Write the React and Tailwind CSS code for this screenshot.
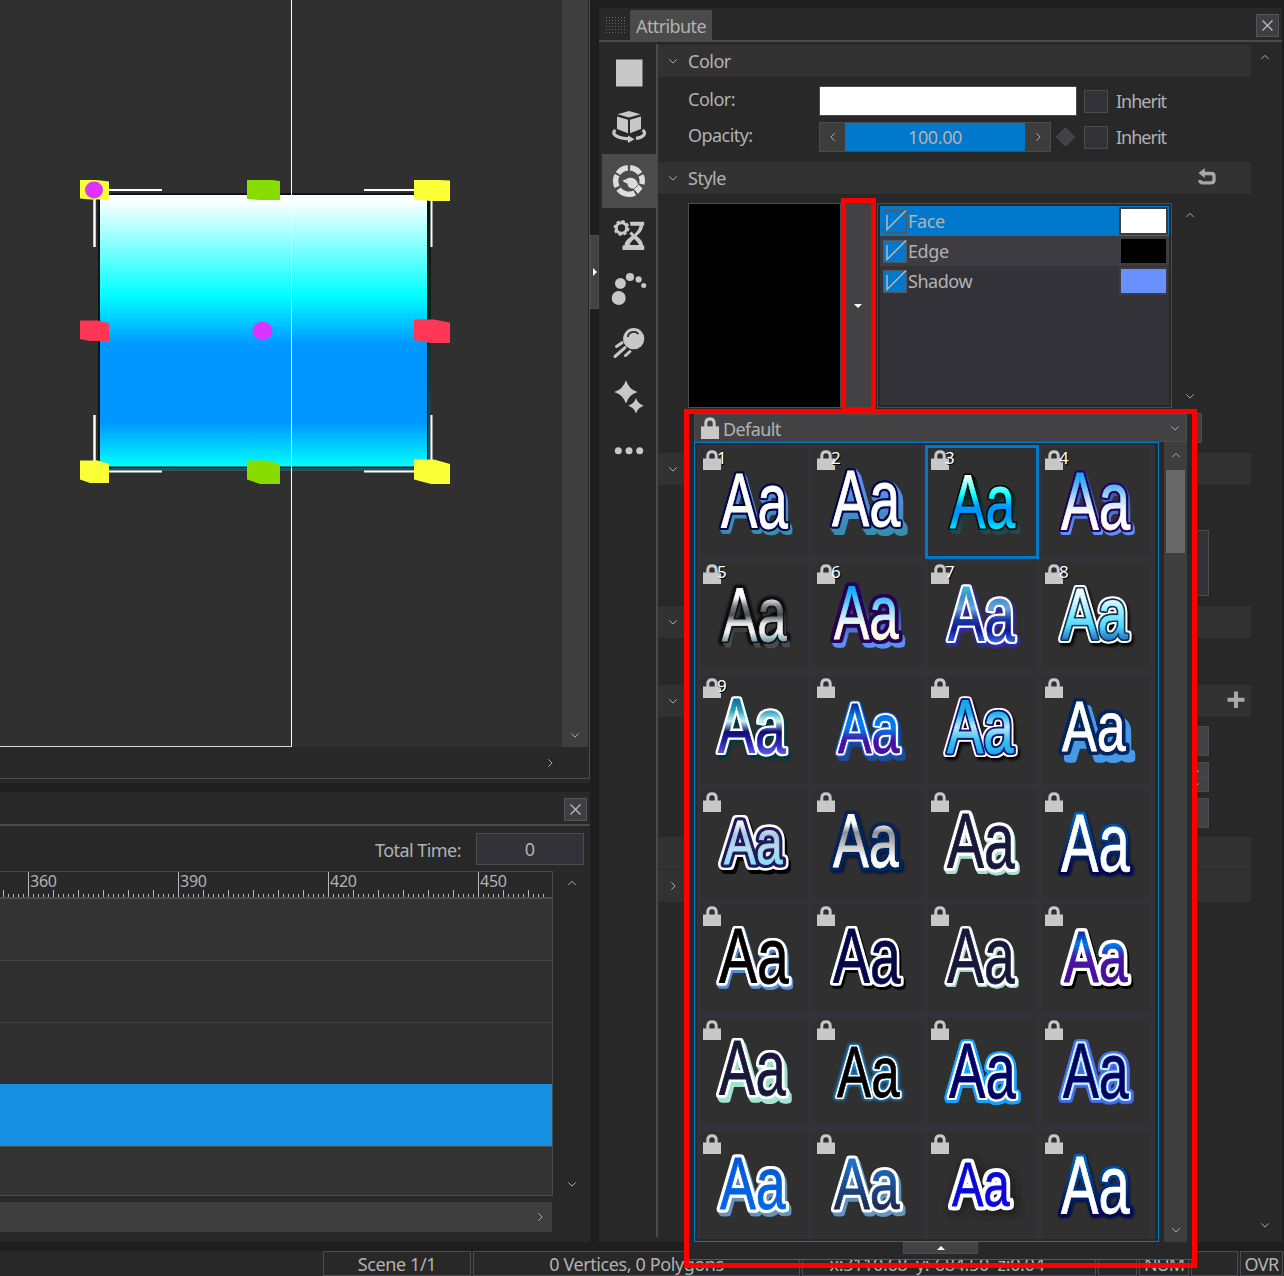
import React from "react";

const LABEL = "whitespace-nowrap text-[18px] leading-[24px] text-[#b2b2b2]";

function Chevron({ dir = "down", className = "" }) {
  const d = {
    down: "M1.5 4 L6 8.5 L10.5 4",
    up: "M1.5 8.5 L6 4 L10.5 8.5",
    left: "M8 1.5 L3.5 6 L8 10.5",
    right: "M4 1.5 L8.5 6 L4 10.5",
  }[dir];
  return (
    <svg viewBox="0 0 12 12" className={"block h-[10px] w-[10px] shrink-0 " + className} fill="none" stroke="#b8b8b8" strokeWidth="1.1">
      <path d={d} />
    </svg>
  );
}

function CloseButton() {
  return (
    <div className="flex h-[23px] w-[23px] items-center justify-center border border-[#555558] bg-[#3f3f42]">
      <svg viewBox="0 0 11 11" className="h-[11px] w-[11px]" stroke="#b8b8b8" strokeWidth="1.4">
        <path d="M0.500 0.500 L10.500 10.500 M10.500 0.500 L0.500 10.500" />
      </svg>
    </div>
  );
}

/* ---------- viewport ---------- */

function Scene() {
  return (
    <svg width="562" height="747" viewBox="0 0 562 747" className="block shrink-0 bg-[#303030]">
      <defs>
        <linearGradient id="sky" x1="0" y1="0" x2="0" y2="1">
          <stop offset="0" stopColor="#ffffff" />
          <stop offset="0.03" stopColor="#f6ffff" />
          <stop offset="0.37" stopColor="#00ffff" />
          <stop offset="0.555" stopColor="#0096ff" />
          <stop offset="0.835" stopColor="#0096ff" />
          <stop offset="1" stopColor="#00ffff" />
        </linearGradient>
        <linearGradient id="depth" x1="0" y1="0" x2="0" y2="1">
          <stop offset="0" stopColor="#04140a" />
          <stop offset="0.4" stopColor="#0b2418" />
          <stop offset="1" stopColor="#2b5460" />
        </linearGradient>
      </defs>
      <rect x="101" y="196" width="330" height="275" fill="url(#depth)" />
      <rect x="98" y="193" width="330" height="275" fill="#0c1413" />
      <rect x="100" y="195" width="327" height="271.5" fill="url(#sky)" />
      <g fill="#ffffff">
        <rect x="108" y="189" width="54" height="2" />
        <rect x="364" y="189" width="52" height="2" />
        <rect x="108" y="470.5" width="54" height="2" />
        <rect x="364" y="470.5" width="52" height="2" />
        <rect x="430.5" y="200" width="2" height="47" />
        <rect x="430.5" y="415" width="2" height="46" />
      </g>
      <g fill="#c9c6cc">
        <rect x="93" y="199" width="3" height="48" />
        <rect x="93" y="415" width="3" height="47" />
      </g>
      <rect x="94" y="199" width="1" height="48" fill="#fff" />
      <rect x="94" y="415" width="1" height="47" fill="#fff" />
      <g fill="#fbff36">
        <path d="M80 180 H96 L109 181.500 V199.500 H90 L80 198.500 Z" />
        <path d="M414 180 H439 L450 180.500 V201 H431 L414 199.500 Z" />
        <path d="M80 460.500 H98 L109 464 V483 H90 L80 479.500 Z" />
        <path d="M414 459.500 H434 L450 464 V484 H431 L414 479.500 Z" />
      </g>
      <g fill="#88dc00">
        <path d="M247 180 H272 L280 181 V200 H259 L247 199 Z" />
        <path d="M247 460.500 H267 L280 464 V484 H260 L247 479.500 Z" />
      </g>
      <g fill="#ff3654">
        <path d="M80 320.500 H98 L109 323.500 V341 H90 L80 339 Z" />
        <path d="M414 319.500 H434 L450 322.500 V343 H430 L414 340 Z" />
      </g>
      <ellipse cx="94" cy="190" rx="9" ry="8.500" fill="#dc34fe" />
      <ellipse cx="262.500" cy="331" rx="10" ry="9.300" fill="#dc34fe" />
      <rect x="291" y="0" width="1" height="747" fill="#ffffff" />
      <rect x="0" y="746" width="292" height="1" fill="#d8d8d8" />
    </svg>
  );
}

function Viewport() {
  return (
    <div className="h-[783px] bg-[#282828]">
      <div className="flex h-[779px] w-[590px] flex-col border-b border-r border-[#4c4c4c]">
        <div className="flex h-[747px]">
          <Scene />
          <div className="flex w-[26px] flex-col items-center justify-end bg-[#3e3e3e] pb-[7px]">
            <Chevron />
          </div>
        </div>
        <div className="flex flex-1 items-center justify-end pr-[34px]">
          <Chevron dir="right" />
        </div>
      </div>
    </div>
  );
}

/* ---------- timeline ---------- */

function Ruler() {
  const marks = [];
  for (let i = -5; i <= 103; i++) marks.push(i);
  return (
    <svg width="552" height="25" viewBox="0 0 552 25" className="block overflow-visible" shapeRendering="crispEdges">
      {marks.map((i) => {
        const h = i % 30 === 0 ? 25 : i % 5 === 0 ? 7 : 3;
        return <rect key={i} x={28 + i * 5} y={25 - h} width="1" height={h} fill="#b8b8b8" />;
      })}
      {[360, 390, 420, 450].map((n, k) => (
        <text key={n} x={30 + k * 150} y="15" fontSize="16" textLength="27" fill="#b2b2b2">
          {n}
        </text>
      ))}
    </svg>
  );
}

function Timeline() {
  return (
    <div className="flex h-[450px] flex-col bg-[#282828]">
      <div className="flex h-[34px] items-center justify-end border-b-2 border-[#4a4a4a] pr-[3px] pt-[2px]">
        <CloseButton />
      </div>
      <div className="flex h-[45px] items-start justify-end gap-[15px] pr-[6px] pt-[7px]">
        <span className={LABEL + " mt-[5px] tracking-[-0.55px]"}>Total Time:</span>
        <div className={LABEL + " flex h-[32px] w-[108px] items-center justify-center border border-[#4c4c4c] bg-[#333238]"}>0</div>
      </div>
      <div className="flex">
        <div className="w-[553px]">
          <div className="border-r border-t border-[#4a4a4a]">
            <Ruler />
            <div className="h-[2px] bg-[#4c4c4c]" />
            <div className="h-[62px] border-b border-[#434343] bg-[#333333]" />
            <div className="h-[62px] border-b border-[#434343] bg-[#2f2f2f]" />
            <div className="h-[61px] bg-[#2f2f2f]" />
            <div className="h-[62px] bg-[#168fe3]" />
            <div className="h-[50px] border-b border-t border-[#4c4c4c] bg-[#333333]" />
          </div>
          <div className="mt-[6px] flex h-[30px] w-[552px] items-center justify-end bg-[#3e3e3e] pr-[7px]">
            <Chevron dir="right" />
          </div>
        </div>
        <div className="flex h-[325px] flex-1 flex-col items-center justify-between pb-[7px] pt-[7px]">
          <Chevron dir="up" />
          <Chevron />
        </div>
      </div>
    </div>
  );
}

/* ---------- attribute sidebar ---------- */

function arc(cx, cy, r, a, b) {
  const p = (t) => [cx + r * Math.cos((t * Math.PI) / 180), cy + r * Math.sin((t * Math.PI) / 180)];
  const [x1, y1] = p(a);
  const [x2, y2] = p(b);
  return `M${x1} ${y1} A${r} ${r} 0 0 1 ${x2} ${y2}`;
}

const ICONS = [
  <rect x="14" y="13.500" width="26.500" height="27" />,
  <>
    <path d="M15.500 14.300 L27 11 L38.500 14.300 L27 17.500 Z M15 16.500 L26 19.800 V33.300 L15 29 Z M28 19.800 L39 16.500 V29 L28 33.300 Z" />
    <path d="M13.500 30 C8.500 33.500 14 38.500 29 39 M40.500 30 C45.500 33.500 41 37.500 34 38.400" fill="none" stroke="#c8c8c8" strokeWidth="3.200" />
    <path d="M26 35.500 L32.500 39.300 L26 43 Z" />
  </>,
  <>
    <g fill="none" stroke="#dcdcdc" strokeWidth="5.400">
      <path d={arc(27, 27, 13.3, -146, -95)} />
      <path d={arc(27, 27, 13.3, -85, -34)} />
      <path d={arc(27, 27, 13.3, -25, 14)} />
      <path d={arc(27, 27, 13.3, 154, 206)} />
      <path d={arc(27, 27, 13.3, 64, 142)} />
    </g>
    <path fill="#dcdcdc" d="M20.500 26.500 C23.500 26 25 23.800 29 23.800 C33 24 35 27 35.700 29.500 L40.500 34.500 L36 40 L31.500 34.500 C27.500 34.500 25.500 32.500 25.500 29.500 C24 29.300 22 28.300 20.500 26.500 Z" />
    <path d="M32.500 34.500 L37 30" stroke="#4b4b4b" strokeWidth="0.800" />
  </>,
  <>
    <circle cx="19.500" cy="20" r="5.200" fill="none" stroke="#c8c8c8" strokeWidth="3" />
    <circle cx="19.500" cy="20" r="6.900" fill="none" stroke="#c8c8c8" strokeWidth="2" strokeDasharray="3.100 2.319" />
    <path
      fillRule="evenodd"
      d="M28 13.700 H42.200 V17.500 H41 C41 22 37.500 25.500 34.500 28 C37.500 30 41 33.500 41 37.500 H42.200 V42 H20.500 V37.500 H22.500 C22.500 33 27 30 29.700 28 C28.800 27.300 28 26.500 27.300 25.500 L29.800 23.500 C30.800 25 31.700 26.300 32.200 26.300 C34.500 24.500 37 21 37.500 17.800 H28.500 Z M27.500 37 H37 C36 34.500 34 32.500 32.200 31 C30 32.500 28.500 34.500 27.500 37 Z"
    />
  </>,
  <>
    <circle cx="16.700" cy="36" r="7" />
    <circle cx="18.400" cy="21.400" r="5.400" />
    <circle cx="28" cy="15" r="4.100" />
    <circle cx="36.600" cy="17.400" r="3.100" />
    <circle cx="41.700" cy="23.400" r="2.500" />
  </>,
  <>
    <circle cx="31.700" cy="22.700" r="10.600" />
    <path d="M26 21 C26 15.500 33.500 14.500 36.500 18" fill="none" stroke="#282828" strokeWidth="1.800" />
    <path d="M14.500 30.500 L20 26.700 M13 40.500 L23 31.700 M23.500 39.500 L28 35.500" fill="none" stroke="#c8c8c8" strokeWidth="3" strokeLinecap="round" />
  </>,
  <>
    <path d="M24 10.300 Q26.800 19.500 35.500 22 Q26.800 24.500 24 33.500 Q21 24.500 12.200 22 Q21 19.500 24 10.300 Z" />
    <path d="M34 28 Q36 34 41.800 35.700 Q36 37.500 34 43.500 Q32 37.500 26.200 35.700 Q32 34 34 28 Z" />
  </>,
  <>
    <circle cx="16.300" cy="26.700" r="3.500" />
    <circle cx="27" cy="26.700" r="3.500" />
    <circle cx="37.700" cy="26.700" r="3.500" />
  </>,
];

function Sidebar() {
  return (
    <div className="mt-[2px] h-[1193px] w-[56px] shrink-0 border-r-2 border-[#4a4a4a] pt-[2px]">
      {ICONS.map((icon, i) => (
        <div key={i} className={"h-[54px] w-[54px] " + (i === 2 ? "bg-[#4b4b4b]" : "")}>
          <svg viewBox="0 0 54 54" className="block h-[54px] w-[54px]" fill="#c8c8c8">
            {icon}
          </svg>
        </div>
      ))}
    </div>
  );
}

/* ---------- attribute content ---------- */

function SectionHeader({ title, dir = "down", className = "", children }) {
  return (
    <div className={"flex h-[32px] w-[593px] shrink-0 items-center bg-[#323232] pl-[10px] " + className}>
      {dir ? <Chevron dir={dir} /> : null}
      <span className={LABEL + " ml-[10px] flex-1 tracking-[-0.5px]"}>{title}</span>
      {children}
    </div>
  );
}

function Inherit() {
  return (
    <div className="flex items-center">
      <div className="h-[23px] w-[24px] border border-[#4c4c4c] bg-[#333238]" />
      <span className={LABEL + " ml-[8px] tracking-[-1px]"}>Inherit</span>
    </div>
  );
}

function LayerRow({ name, rowClass, tracking, chip }) {
  return (
    <div className={"flex h-[30px] items-center pl-[3px] pr-px " + rowClass}>
      <div className="h-[23px] w-[24px] border border-[#55555a] bg-[#0078cc]">
        <svg viewBox="0 0 22 21" className="block h-[21px] w-[22px] overflow-visible" fill="none" stroke="#b8b8b8" strokeWidth="1.500">
          <path d="M3 4 V18.500 L22 -0.500" />
        </svg>
      </div>
      <span className={LABEL + " ml-px flex-1 " + tracking}>{name}</span>
      <div className={"h-[28px] w-[49px] border-2 border-[#3d3c41] " + chip} />
    </div>
  );
}

function AttributeContent() {
  return (
    <div className="flex w-[593px] shrink-0 flex-col pt-[3px]">
      <SectionHeader title="Color" />
      <div className="mt-[9px] flex h-[30px] items-center pl-[30px]">
        <span className={LABEL + " -mt-[4px] w-[131px] tracking-[-0.5px]"}>Color:</span>
        <div className="h-[30px] w-[258px] border border-[#4c4c4c] bg-white" />
        <div className="ml-[7px]">
          <Inherit />
        </div>
      </div>
      <div className="mt-[6px] flex h-[30px] items-center pl-[30px]">
        <span className={LABEL + " -mt-[4px] w-[131px] tracking-[-0.55px]"}>Opacity:</span>
        <div className="flex h-[30px] w-[232px] border border-[#4c4c4c]">
          <div className="flex w-[25px] items-center justify-center bg-[#3d3d3d]">
            <Chevron dir="left" />
          </div>
          <div className={LABEL + " flex flex-1 items-center justify-center bg-[#0078cc] tracking-[-0.4px]"}>100.00</div>
          <div className="flex w-[25px] items-center justify-center bg-[#3d3d3d]">
            <Chevron dir="right" />
          </div>
        </div>
        <svg viewBox="0 0 20 20" className="ml-[4px] h-[20px] w-[20px]">
          <path d="M10.500 1 L19.500 10 L10.500 19 L1.500 10 Z" fill="#424244" stroke="#505052" />
        </svg>
        <div className="ml-[9px]">
          <Inherit />
        </div>
      </div>

      <SectionHeader title="Style" className="mt-[10px]">
        <svg viewBox="0 0 18 18" className="mb-[2px] mr-[35px] h-[18px] w-[18px]" fill="none" stroke="#a8a8a8" strokeWidth="3.300">
          <path d="M4 5.500 H13 Q16 5.500 16 8 V12 Q16 14.800 13 14.800 H4 Q2 14.800 2 12" />
          <path d="M0.500 5 L6.800 0.300 V10 Z" fill="#a8a8a8" stroke="none" />
        </svg>
      </SectionHeader>

      <div className="mt-[9px] flex h-[205px] pl-[30px]">
        <div className="w-[153px] border border-[#4c4c4c] bg-black" />
        <div className="ml-[5px] flex w-[25px] items-center justify-center bg-[#424244] pr-px">
          <svg viewBox="0 0 8 4" className="h-[4px] w-[8px]" fill="#fff">
            <path d="M0 0 H8 L4 4 Z" />
          </svg>
        </div>
        <div className="ml-[6px] w-[295px] border border-[#4c4c4c] px-[2px] py-[2px]">
          <div className="h-[199px] bg-[#333238]">
            <LayerRow name="Face" rowClass="bg-[#0078cc]" tracking="tracking-[-0.4px]" chip="bg-white" />
            <LayerRow name="Edge" rowClass="bg-[#3d3c41]" tracking="tracking-[-0.4px]" chip="bg-black" />
            <LayerRow name="Shadow" rowClass="" tracking="tracking-[-0.45px]" chip="bg-[#6a90ff]" />
          </div>
        </div>
        <div className="ml-[13px] flex flex-col justify-between py-[7px]">
          <Chevron dir="up" />
          <Chevron />
        </div>
      </div>

      <div className="ml-[30px] mt-[5px] h-[30px] w-[514px] border border-[#4c4c4c] bg-[#424244]" />
      <SectionHeader className="mt-[10px]" />
      <div className="ml-[30px] mt-[45px] h-[66px] w-[521px] border border-[#4c4c4c] bg-[#333238]" />
      <SectionHeader className="mt-[10px]" />
      <SectionHeader className="mt-[47px]">
        <svg viewBox="0 0 18 18" className="mb-[2px] mr-[6px] h-[18px] w-[18px]" stroke="#a8a8a8" strokeWidth="4">
          <path d="M9 0.500 V17 M0.500 8.700 H17.500" />
        </svg>
      </SectionHeader>
      <div className="ml-[161px] mt-[9px] h-[30px] w-[390px] border border-[#4c4c4c] bg-[#424244]" />
      <div className="ml-[161px] mt-[6px] flex h-[30px] w-[390px] flex-col items-end border border-[#4c4c4c] bg-[#424244]">
        <div className="flex h-[15px] w-full items-center justify-end border-b border-[#4c4c4c] pr-[8px]">
          <Chevron dir="up" />
        </div>
        <div className="flex h-[13px] items-center pr-[8px]">
          <Chevron />
        </div>
      </div>
      <div className="ml-[161px] mt-[6px] h-[30px] w-[390px] border border-[#4c4c4c] bg-[#424244]" />
      <SectionHeader className="mt-[9px]" dir={null} />
      <SectionHeader className="mt-px" dir="right" />
    </div>
  );
}

function AttributePanel() {
  const dots = [];
  for (let r = 0; r < 6; r++) for (let c = 0; c < 7; c++) dots.push([c, r]);
  return (
    <div className="mt-[8px] flex h-[1234px] w-[683px] flex-col bg-[#282828]">
      <div className="flex h-[34px] items-end border-b-2 border-[#4a4a4a]">
        <svg width="20" height="18" viewBox="0 0 20 18" className="mb-[5px] ml-[7px]" shapeRendering="crispEdges">
          {dots.map(([c, r]) => (
            <rect key={c + "-" + r} x={c * 3} y={r * 3} width="1" height="1" fill="#686868" />
          ))}
        </svg>
        <div className={LABEL + " ml-[4px] flex h-[30px] w-[82px] items-center justify-center bg-[#4a4a4a] pt-[2px] tracking-[-0.6px]"}>Attribute</div>
        <div className="mb-[3px] ml-auto mr-[3px]">
          <CloseButton />
        </div>
      </div>
      <div className="flex flex-1 pl-[3px]">
        <Sidebar />
        <AttributeContent />
        <div className="flex flex-1 flex-col items-center justify-between pb-[12px] pr-[4px] pt-[10px]">
          <Chevron dir="up" />
          <Chevron />
        </div>
      </div>
    </div>
  );
}

/* ---------- style popup ---------- */

/*
 * box: [left, right, top, baseline] of the sample inside its tile
 * fill: vertical gradient stops; rings: outlines, outermost first [colour, radius]
 * cast: [dx, dy, radius, top colour, bottom colour]; glow: [colour, radius, blur, dx, dy]
 */
const STYLES = [
  { box: [21, 87, 26.5, 80], fill: ["#fff"], rings: [["#04064a", 2.4]], cast: [2.5, 3.5, 2.2, "#5a88ee", "#388cac"] },
  { box: [18, 85.5, 23, 78], fill: ["#fff"], rings: [["#04064a", 2.4]], cast: [4.5, 5.5, 3, "#628cff", "#388cac"] },
  { box: [22, 86.5, 27, 79.5], fill: ["#fff", "#8ff", "#00ffff", "#0096ff", "#0096ff", "#00e4ff"], rings: [["#03120c", 2]], cast: [3.5, 4.5, 2, "#081a10", "#24484c"] },
  { box: [19, 87.5, 24, 80.5], fill: ["#0aa4ff", "#58b6fa", "#c2e6fa", "#fff", "#fff"], rings: [["#250350", 2.4]], cast: [2, 3, 2.4, "#1c3c98", "#5c90f8"] },
  { box: [22, 86, 27, 79], fill: ["#fff", "#fff", "#7a8084", "#4a4e50", "#e8eaea", "#eef2f2", "#74a0ac"], rings: [["#111", 2]], cast: [3, 5.5, 0.3, "#222", "#4c4c4c"], glow: ["#000", 3.5, 1.8, 0, 0] },
  { box: [20, 84, 25, 77], fill: ["#0aa4ff", "#4cc0fa", "#b0e4f4", "#fffcee", "#fffcee"], rings: [["#250350", 4]], cast: [3, 5, 3.6, "#252060", "#5c90f8"] },
  { box: [20, 86, 25, 79], fill: ["#3ab8e0", "#3a8cc8", "#6aa8da", "#1c3a9c", "#1014a0", "#3060d0"], rings: [["#fff", 2.5]], glow: ["#3028c8", 3.4, 1.4, 1, 2] },
  { box: [20, 85, 27, 77], fill: ["#fff", "#d8f6ff", "#8ce8ff", "#4cd8fc", "#2878c8"], rings: [["#fff", 4], ["#083858", 2]], glow: ["#000", 4, 1.8, 2, 2.5] },
  { box: [18, 85, 24, 77], fill: ["#1070a0", "#28a0b8", "#c4f4fc", "#0c0c78", "#2424a8", "#5850e8"], rings: [["#fff", 2.6]], glow: ["#023840", 3, 1.6, 2, 2.5] },
  { box: [24, 85, 29, 77], fill: ["#0830a0", "#0078ee", "#0078ee", "#4810a0", "#4810a0"], rings: [["#1468e0", 3.2], ["#fff", 2.2]], cast: [3, 4.5, 3, "#0c3478", "#1e4a96"] },
  { box: [19, 85, 25, 77], fill: ["#18a4e4", "#20b8ea", "#bce8fa", "#38c4ee", "#18b0e8"], rings: [["#fff", 4], ["#14147c", 2.2]], glow: ["#000", 4, 1.6, 2, 2.5] },
  { box: [20, 83, 26, 75], fill: ["#fff"], rings: [["#04245c", 4]], cast: [6, 7.5, 3.5, "#4898ea", "#4898ea"], castFrom: 0.85 },
  { box: [24, 82, 31, 74], fill: ["#fff", "#a8c8e4", "#b8dcf0", "#84e0f8"], rings: [["#fff", 6], ["#201c5c", 3.6]], cast: [2.5, 4, 6, "#000", "#000"] },
  { box: [19, 84, 25, 77], fill: ["#fff", "#fff", "#909094", "#b0b0b0", "#d8d8d8", "#fff", "#fff"], rings: [["#04245c", 3.8]], glow: ["#04183a", 4, 1.3, 1.5, 1.5] },
  { box: [19, 86, 25, 78], fill: ["#18183c"], rings: [["#fff", 3.4]], cast: [1.5, 2.5, 3.4, "#a0d8cc", "#a8e0d4"] },
  { box: [19, 87, 25, 81], fill: ["#fff"], rings: [], cast: [0, 0, 3.2, "#0060b0", "#000850"], glow: ["#000a40", 3.4, 0.9, 1, 1] },
  { box: [19, 88, 25, 79], fill: ["#000"], rings: [["#fff", 3]], cast: [1.5, 2.5, 3, "#4c80c8", "#5c90d8"] },
  { box: [19, 86, 25, 79], fill: ["#040848"], rings: [["#fff", 3]], cast: [2, 2.5, 3, "#000", "#000"] },
  { box: [19, 86, 25, 79], fill: ["#18183c"], rings: [["#fff", 2.8]], cast: [1.5, 2, 2.4, "#a0d8cc", "#a0d8cc"] },
  { box: [22, 85, 28, 78], fill: ["#083090", "#0078ee", "#4818a8", "#4810a0", "#4810a0"], rings: [["#fff", 3.8]], cast: [2, 2.5, 3.8, "#000", "#000"] },
  { box: [19, 85, 24, 77], fill: ["#18183c"], rings: [["#fff", 3]], cast: [3, 5, 3, "#98d8cc", "#a4e4d4"] },
  { box: [23, 85, 29, 79], fill: ["#000"], rings: [["#fff", 2]], glow: ["#189cf4", 3, 1.5, 0, 0] },
  { box: [21, 87, 26, 80], fill: ["#000464"], rings: [["#18a0ff", 4.6], ["#fff", 2.6]], cast: [0.4, 1, 4.6, "#18a0ff", "#18a0ff"] },
  { box: [21, 86, 26, 80], fill: ["#040464"], rings: [["#4c6ce8", 4.6], ["#c0f4ff", 2.4]], cast: [0.4, 0.5, 4.6, "#4c6ce8", "#4060d8"] },
  { box: [20, 85, 26, 77], fill: ["#0058d8", "#0068e8"], rings: [["#fff", 3.4]], cast: [2.5, 4, 3.2, "#5888a8", "#6494bc"] },
  { box: [20, 85, 27, 77], fill: ["#1c74d0", "#1c5ca8", "#1c4078", "#1c2850"], rings: [["#fff", 3.2]], cast: [2.5, 4, 3.2, "#5888a8", "#6494bc"] },
  { box: [24, 81, 31, 74], fill: ["#0808d0", "#0c08e0"], rings: [["#fff", 4.2]], glow: ["#1a1a1a", 5, 4, 3, 3] },
  { box: [19, 87, 25, 81], fill: ["#fff"], rings: [], cast: [0, 0, 3.2, "#0060b0", "#000850"], glow: ["#000a40", 3.4, 0.9, 1, 1] },
];

const CAP = 68.8;
const RUN = 121;

function Sample({ id, spec }) {
  const [l, r, t, b] = spec.box;
  const sx = (r - l) / RUN;
  const sy = (b - t) / CAP;

  /* Two sideways copies keep the outline even although the letters are condensed. */
  const outline = (key, dx, dy, paint, radius) => {
    const spread = radius * (1 - sx / sy);
    return (
      <g key={key} fill={paint} stroke={paint} strokeWidth={(2 * radius) / sy} strokeLinejoin="round">
        {[-spread, spread].map((s, i) => (
          <use key={i} href={"#" + id + "w"} transform={`translate(${l + dx + s} ${b + dy}) scale(${sx} ${sy})`} />
        ))}
      </g>
    );
  };

  const casts = [];
  if (spec.cast) {
    const [dx, dy, rad] = spec.cast;
    const from = spec.castFrom || 0;
    const steps = dx || dy ? 4 : 1;
    for (let i = 1; i <= steps; i++) {
      const k = from + ((1 - from) * i) / steps;
      casts.push(outline("cast" + i, dx * k, dy * k, `url(#${id}c)`, rad));
    }
  }
  const stops = spec.fill.length > 1 ? spec.fill : [spec.fill[0], spec.fill[0]];
  return (
    <svg width="108" height="108" viewBox="0 0 108 108" className="block font-['Liberation_Sans',Arial,sans-serif]" fontSize="100">
      <defs>
        <linearGradient id={id + "f"} gradientUnits="userSpaceOnUse" x1="0" y1={-CAP} x2="0" y2="0">
          {stops.map((c, i) => (
            <stop key={i} offset={i / (stops.length - 1)} stopColor={c} />
          ))}
        </linearGradient>
        {spec.cast ? (
          <linearGradient id={id + "c"} gradientUnits="userSpaceOnUse" x1="0" y1={-CAP} x2="0" y2="0">
            <stop offset="0" stopColor={spec.cast[3]} />
            <stop offset="1" stopColor={spec.cast[4]} />
          </linearGradient>
        ) : null}
        {spec.glow ? (
          <filter id={id + "g"} filterUnits="userSpaceOnUse" x="0" y="0" width="108" height="108">
            <feGaussianBlur stdDeviation={spec.glow[2]} />
          </filter>
        ) : null}
      </defs>
      {spec.glow ? <g filter={`url(#${id}g)`}>{outline("glow", spec.glow[3], spec.glow[4], spec.glow[0], spec.glow[1])}</g> : null}
      {casts}
      {spec.rings.map(([c, rad], i) => outline("ring" + i, 0, 0, c, rad))}
      <g transform={`translate(${l} ${b}) scale(${sx} ${sy})`} fill={`url(#${id}f)`} stroke={`url(#${id}f)`} strokeWidth={0.8 / sy}>
        <text id={id + "w"}>Aa</text>
      </g>
    </svg>
  );
}

function Lock({ className }) {
  return (
    <svg viewBox="0 0 18 20" className={className} preserveAspectRatio="none">
      <path d="M4.800 9 V5.800 Q4.800 1.700 9 1.700 Q13.200 1.700 13.200 5.800 V9" fill="none" stroke="#c8c8c8" strokeWidth="3" />
      <path d="M0 8.500 H18 V20 H0 Z" fill="#c8c8c8" />
    </svg>
  );
}

function Tile({ index, spec }) {
  return (
    <div className={"relative h-[114px] w-[114px] border-[3px] bg-[#303030] " + (index === 2 ? "border-[#0078cc]" : "border-[#333238]")}>
      <Sample id={"s" + index} spec={spec} />
      <Lock className="absolute left-[3px] top-[2px] h-[20px] w-[18px]" />
      {index < 9 ? (
        <span className="absolute left-[17px] top-0 text-[17px] leading-[20px] text-white [text-shadow:1px_1px_0_#000]">{index + 1}</span>
      ) : null}
    </div>
  );
}

function StylePopup() {
  return (
    <div className="absolute left-[684px] top-[409px] h-[859px] w-[513px] border-[5px] border-[#ff0000]">
      <div className="flex h-[846px] w-[503px] flex-col border-b border-[#5a5a5a] bg-[#282828] pl-[5px]">
        <div className="flex h-[28px] w-[493px] items-center border border-[#4c4c4c] bg-[#424244] pl-[6px] pr-[6px]">
          <Lock className="h-[22px] w-[18px]" />
          <span className={LABEL + " ml-[4px] mt-px flex-1 tracking-[-0.6px]"}>Default</span>
          <Chevron />
        </div>
        <div className="flex h-[800px]">
          <div className="h-[800px] w-[465px] border border-[#0078cc] px-[2px] pb-[2px] pt-[2px]">
            <div className="grid h-[794px] w-[458px] grid-cols-[repeat(4,114px)] content-start overflow-hidden bg-[#333238]">
              {STYLES.map((s, i) => (
                <Tile key={i} index={i} spec={s} />
              ))}
            </div>
          </div>
          <div className="ml-[5px] flex w-[23px] flex-col items-center bg-[#3e3e3e] pb-[7px] pt-[8px]">
            <Chevron dir="up" />
            <div className="mt-[10px] h-[83px] w-[19px] bg-[#686868]" />
            <Chevron className="mt-auto" />
          </div>
        </div>
        <div className="ml-[209px] flex h-[12px] w-[75px] items-center justify-center border border-[#4c4c4c] bg-[#424244]">
          <svg viewBox="0 0 8 4" className="h-[4px] w-[8px]" fill="#fff">
            <path d="M0 4 H8 L4 0 Z" />
          </svg>
        </div>
      </div>
    </div>
  );
}

/* ---------- status bar ---------- */

const CELL = "flex h-[25px] shrink-0 items-center justify-center border border-[#4c4c4c] ";

function StatusBar() {
  return (
    <div className={LABEL + " mt-[9px] flex h-[25px] w-[1284px] gap-[2px] overflow-hidden bg-[#282828] pl-[323px]"}>
      <div className={CELL + "w-[148px] tracking-[-0.4px]"}>Scene 1/1</div>
      <div className={CELL + "w-[327px] tracking-[-0.4px]"}>0 Vertices, 0 Polygons</div>
      <div className={CELL + "w-[294px] whitespace-pre pr-[24px] tracking-[-0.35px]"}>{"x:3110.68  y:-684.50  z:0.04"}</div>
      <div className={CELL + "w-[39px]"} />
      <div className={CELL + "w-[50px] tracking-[-1px]"}>NUM</div>
      <div className={CELL + "w-[47px]"} />
      <div className={CELL + "w-[43px] tracking-[-0.6px]"}>OVR</div>
    </div>
  );
}

export default function App() {
  return (
    <div className="relative h-[1276px] w-[1284px] overflow-hidden bg-[#1e1e1e] font-['Noto_Sans','Open_Sans',sans-serif]">
      <div className="flex h-[1242px]">
        <div className="flex w-[590px] flex-col gap-[9px]">
          <Viewport />
          <Timeline />
        </div>
        <div className="w-[9px] pt-[235px]">
          <div className="flex h-[74px] items-center justify-center border border-[#4c4c4c] bg-[#424244]">
            <svg viewBox="0 0 4 8" className="h-[8px] w-[4px]" fill="#fff">
              <path d="M0 0 V8 L4 4 Z" />
            </svg>
          </div>
        </div>
        <AttributePanel />
      </div>
      <StatusBar />
      <StylePopup />
      <div className="absolute left-[841px] top-[198px] h-[214px] w-[35px] border-[5px] border-[#ff0000]" />
    </div>
  );
}
